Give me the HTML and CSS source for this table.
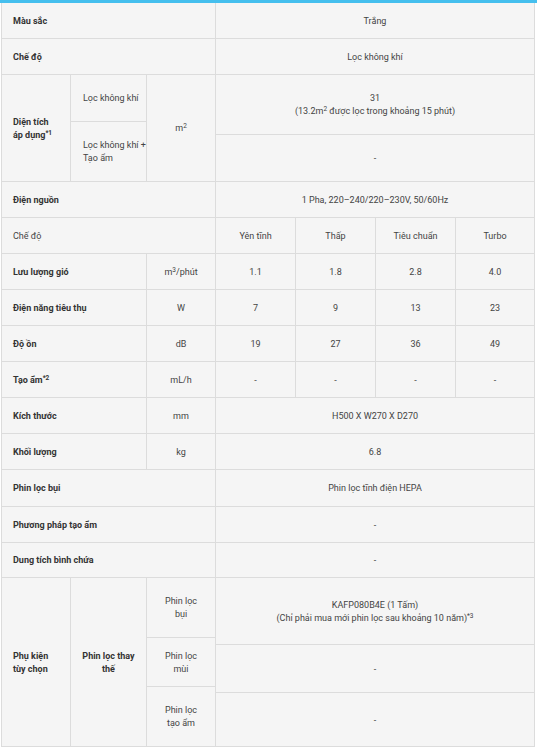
FILE: index.html
```html
<!DOCTYPE html>
<html lang="vi">
<head>
<meta charset="utf-8">
<title>Thông số kỹ thuật</title>
<link rel="stylesheet" href="styles.css">
</head>
<body>
<div class="topbar"></div>
<div class="spec">
  <div class="cell lbl s13">Màu sắc</div>
  <div class="cell val s47">Trắng</div>

  <div class="cell lbl s13">Chế độ</div>
  <div class="cell val s47">Lọc không khí</div>

  <div class="cell lbl"><span>Diện tích<br>áp dụng<sup>*1</sup></span></div>
  <div class="stack area-l">
    <div class="cell sub">Lọc không khí</div>
    <div class="cell sub"><span>Lọc không khí +<br>Tạo ẩm</span></div>
  </div>
  <div class="cell val"><span>m<sup>2</sup></span></div>
  <div class="stack area-r s47">
    <div class="cell val"><span>31<br>(13.2m<sup>2</sup> được lọc trong khoảng 15 phút)</span></div>
    <div class="cell val">-</div>
  </div>

  <div class="cell lbl s13">Điện nguồn</div>
  <div class="cell val s47">1 Pha, 220–240/220–230V, 50/60Hz</div>

  <div class="cell lbl reg s13">Chế độ</div>
  <div class="cell val">Yên tĩnh</div>
  <div class="cell val">Thấp</div>
  <div class="cell val">Tiêu chuẩn</div>
  <div class="cell val">Turbo</div>

  <div class="cell lbl s12">Lưu lượng gió</div>
  <div class="cell val"><span>m<sup>3</sup>/phút</span></div>
  <div class="cell val">1.1</div>
  <div class="cell val">1.8</div>
  <div class="cell val">2.8</div>
  <div class="cell val">4.0</div>

  <div class="cell lbl s12">Điện năng tiêu thụ</div>
  <div class="cell val">W</div>
  <div class="cell val">7</div>
  <div class="cell val">9</div>
  <div class="cell val">13</div>
  <div class="cell val">23</div>

  <div class="cell lbl s12">Độ ồn</div>
  <div class="cell val">dB</div>
  <div class="cell val">19</div>
  <div class="cell val">27</div>
  <div class="cell val">36</div>
  <div class="cell val">49</div>

  <div class="cell lbl s12"><span>Tạo ẩm<sup>*2</sup></span></div>
  <div class="cell val">mL/h</div>
  <div class="cell val">-</div>
  <div class="cell val">-</div>
  <div class="cell val">-</div>
  <div class="cell val">-</div>

  <div class="cell lbl s12">Kích thước</div>
  <div class="cell val">mm</div>
  <div class="cell val s47">H500 X W270 X D270</div>

  <div class="cell lbl s12">Khối lượng</div>
  <div class="cell val">kg</div>
  <div class="cell val s47">6.8</div>

  <div class="cell lbl s13">Phin lọc bụi</div>
  <div class="cell val s47">Phin lọc tĩnh điện HEPA</div>

  <div class="cell lbl s13">Phương pháp tạo ẩm</div>
  <div class="cell val s47">-</div>

  <div class="cell lbl s13">Dung tích bình chứa</div>
  <div class="cell val s47">-</div>

  <div class="cell lbl"><span>Phụ kiện<br>tùy chọn</span></div>
  <div class="cell lbl ctr"><span>Phin lọc thay<br>thế</span></div>
  <div class="stack acc-l">
    <div class="cell val"><span>Phin lọc<br>bụi</span></div>
    <div class="cell val"><span>Phin lọc<br>mùi</span></div>
    <div class="cell val"><span>Phin lọc<br>tạo ẩm</span></div>
  </div>
  <div class="stack acc-r s47">
    <div class="cell val"><span>KAFP080B4E (1 Tấm)<br>(Chỉ phải mua mới phin lọc sau khoảng 10 năm)<sup>*3</sup></span></div>
    <div class="cell val">-</div>
    <div class="cell val">-</div>
  </div>
</div>
</body>
</html>
```
FILE: styles.css
```css
html, body {
  margin: 0;
  padding: 0;
  background: #ffffff;
}

body {
  font-family: Roboto, "Liberation Sans", Arial, sans-serif;
  font-size: 9px;
  line-height: 13px;
  color: #444444;
}

.topbar {
  height: 3px;
  background: #45bfee;
}

.spec {
  margin-left: 1px;
  width: 532px;
  display: grid;
  grid-template-columns: 68px 75px 68px 79px 79px 79px 78px;
  grid-template-rows: 35px 35px 106px 35px 35px 35px 35px 35px 35px 35px 35px 36px 35px 34px 168px;
  gap: 1px;
  padding: 0 1px 1px 1px;
  background: #dcdcdc;
}

.cell {
  background: #f5f5f5;
  display: flex;
  align-items: center;
  min-width: 0;
  padding-top: 1px;
}

.lbl {
  padding-left: 11px;
  font-weight: 700;
  color: #333333;
}

.lbl.reg {
  font-weight: 400;
  color: #444444;
}

.lbl.ctr {
  padding-left: 0;
  justify-content: center;
  text-align: center;
}

.sub {
  padding-left: 12px;
}

.val {
  justify-content: center;
  text-align: center;
}

.s13 { grid-column: 1 / 4; }
.s12 { grid-column: 1 / 3; }
.s47 { grid-column: 4 / 8; }

.stack {
  display: grid;
  gap: 1px;
  padding-top: 0;
  background: #dcdcdc;
}

.area-l { grid-template-rows: 46px 59px; }
.area-r { grid-template-rows: 59px 46px; }
.acc-l { grid-template-rows: 59px 48px 59px; }
.acc-r { grid-template-rows: 66px 47px 53px; }

sup {
  font-size: 6.5px;
  line-height: 0;
  vertical-align: 3px;
}
```
